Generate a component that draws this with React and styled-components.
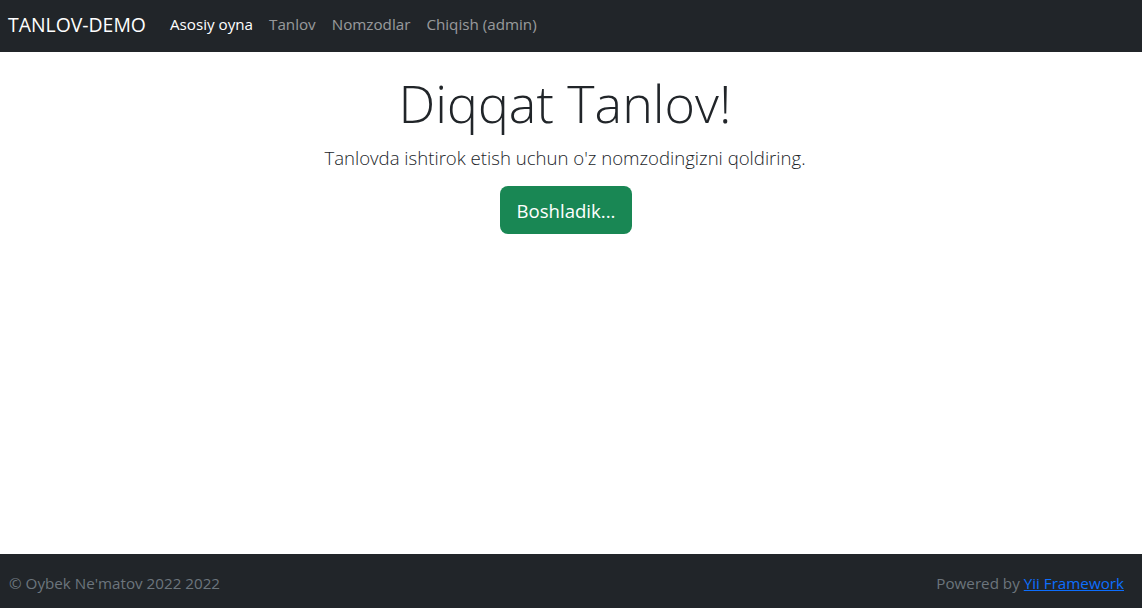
import React from "react";
import styled, { createGlobalStyle } from "styled-components";

const Global = createGlobalStyle`
  html, body { margin: 0; padding: 0; height: 100%; }
  body { font-family: "Open Sans", "Noto Sans", sans-serif; color: #212529; background: #fff; }
  #root { min-height: 100%; display: flex; flex-direction: column; }
`;

const Page = styled.div`
  display: flex;
  flex-direction: column;
  min-height: 608px;
`;

const Navbar = styled.nav`
  height: 52px;
  box-sizing: border-box;
  background: #212529;
  display: flex;
  align-items: center;
  padding: 0 8px 4px;
`;

const Brand = styled.a`
  color: #fff;
  font-size: 19.4px;
  margin-right: 16px;
  text-decoration: none;
`;

const NavLink = styled.a`
  color: ${(p) => (p.$active ? "#fff" : "rgba(255,255,255,0.55)")};
  font-size: 15.2px;
  padding: 0 8px;
  text-decoration: none;
`;

const Main = styled.main`
  flex: 1;
  display: flex;
  flex-direction: column;
  align-items: center;
  padding: 20px 12px 0 0;
`;

const Title = styled.h1`
  margin: 0;
  font-size: 52px;
  font-weight: 300;
  line-height: 62px;
`;

const Lead = styled.p`
  margin: 9px 0 13px;
  font-size: 18.6px;
  line-height: 30px;
  font-weight: 300;
`;

const Button = styled.a`
  background: #198754;
  color: #fff;
  font-size: 18.6px;
  width: 132px;
  height: 48px;
  margin-left: 2px;
  display: flex;
  align-items: center;
  justify-content: center;
  border-radius: 8px;
  text-decoration: none;
`;

const Footer = styled.footer`
  height: 54px;
  box-sizing: border-box;
  background: #212529;
  display: flex;
  align-items: center;
  justify-content: space-between;
  padding: 4px 18px 0 9px;
  font-size: 15.2px;
  color: #6c757d;
`;

const FootLink = styled.a`
  color: #0d6efd;
  text-decoration: underline;
`;

export default function App() {
  return (
    <Page>
      <Global />
      <Navbar>
        <Brand href="#">TANLOV-DEMO</Brand>
        <NavLink $active href="#">Asosiy oyna</NavLink>
        <NavLink href="#">Tanlov</NavLink>
        <NavLink href="#">Nomzodlar</NavLink>
        <NavLink href="#">Chiqish (admin)</NavLink>
      </Navbar>
      <Main>
        <Title>Diqqat Tanlov!</Title>
        <Lead>Tanlovda ishtirok etish uchun o'z nomzodingizni qoldiring.</Lead>
        <Button href="#">Boshladik...</Button>
      </Main>
      <Footer>
        <span>© Oybek Ne'matov 2022 2022</span>
        <span>Powered by <FootLink href="#">Yii Framework</FootLink></span>
      </Footer>
    </Page>
  );
}
